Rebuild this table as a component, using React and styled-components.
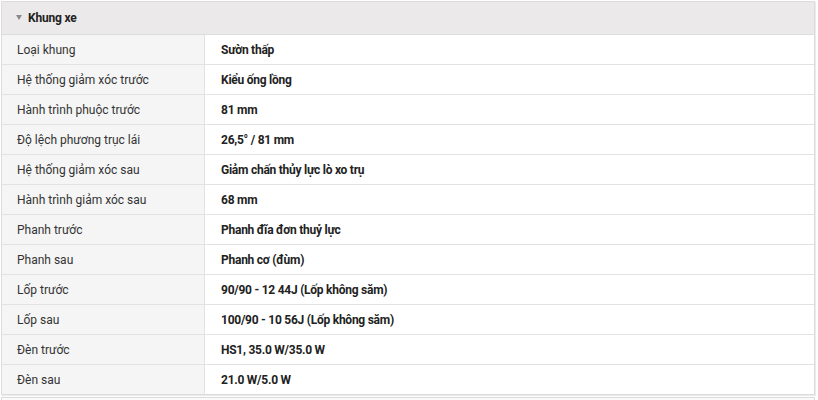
import React from 'react';
import styled, { createGlobalStyle } from 'styled-components';

const GlobalStyle = createGlobalStyle`
    body {
        margin: 0;
        background: #fff;
        font-family: Roboto, "Noto Sans", sans-serif;
        color: #333;
    }
`;

const Wrap = styled.div`
    padding: 1px 3px 0 1px;
`;

const Panel = styled.div`
    border: 1px solid #dcdcdc;
    box-shadow: 1px 1px 1px rgba(0, 0, 0, 0.08);
    margin-bottom: 2px;
`;

const NextPanel = styled.div`
    height: 20px;
    border: 1px solid #dcdcdc;
    background: #fafafa;
`;

const Header = styled.div`
    height: 32px;
    display: flex;
    align-items: center;
    gap: 6px;
    padding-left: 14px;
    background: #ebe9e9;
    font-size: 12px;
    font-weight: 700;
    letter-spacing: -0.2px;
    color: #222;
    border-bottom: 1px solid #dcdcdc;
`;

const Caret = styled.span`
    width: 0;
    height: 0;
    border-left: 3.5px solid transparent;
    border-right: 3.5px solid transparent;
    border-top: 5px solid #8a8a8a;
    margin-top: -2px;
`;

const Row = styled.div`
    display: grid;
    grid-template-columns: 203px 1fr;
    height: 29px;
    border-top: ${p => (p.first ? 'none' : '1px solid #e2e2e2')};
`;

const Label = styled.div`
    display: flex;
    align-items: center;
    padding-left: 15px;
    background: #f5f5f5;
    border-right: 1px solid #e2e2e2;
    font-size: 12px;
    color: #333;
`;

const Value = styled.div`
    display: flex;
    align-items: center;
    padding-left: 16px;
    background: #fff;
    font-size: 12px;
    font-weight: 700;
    letter-spacing: -0.25px;
    color: #222;
`;

const specs = [
    ['Loại khung', 'Sườn thấp'],
    ['Hệ thống giảm xóc trước', 'Kiểu ống lồng'],
    ['Hành trình phuộc trước', '81 mm'],
    ['Độ lệch phương trục lái', '26,5° / 81 mm'],
    ['Hệ thống giảm xóc sau', 'Giảm chấn thủy lực lò xo trụ'],
    ['Hành trình giảm xóc sau', '68 mm'],
    ['Phanh trước', 'Phanh đĩa đơn thuỷ lực'],
    ['Phanh sau', 'Phanh cơ (đùm)'],
    ['Lốp trước', '90/90 - 12 44J (Lốp không săm)'],
    ['Lốp sau', '100/90 - 10 56J (Lốp không săm)'],
    ['Đèn trước', 'HS1, 35.0 W/35.0 W'],
    ['Đèn sau', '21.0 W/5.0 W'],
];

export default function App() {
    return (
        <Wrap>
            <GlobalStyle />
            <Panel>
                <Header>
                    <Caret />
                    Khung xe
                </Header>
                {specs.map(([k, v], i) => (
                    <Row key={k} first={i === 0}>
                        <Label>{k}</Label>
                        <Value>{v}</Value>
                    </Row>
                ))}
            </Panel>
            <NextPanel />
        </Wrap>
    );
}
